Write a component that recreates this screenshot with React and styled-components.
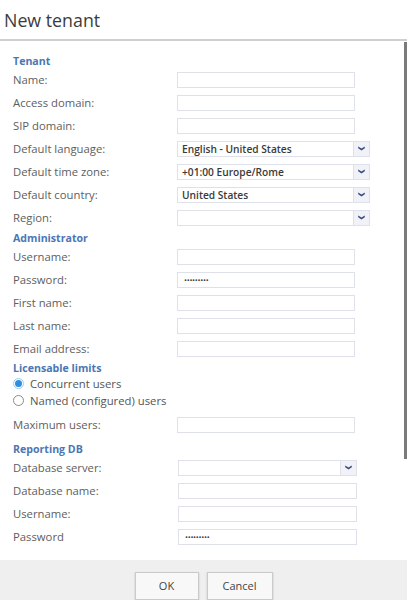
import styled, { createGlobalStyle } from "styled-components";

const GlobalStyle = createGlobalStyle`
    body {
        margin: 0;
        font-family: "Open Sans", "Noto Sans", sans-serif;
        background: #fff;
    }
`;

const Page = styled.div`
    display: flex;
    flex-direction: column;
    height: 600px;
    width: 407px;
    overflow: hidden;
`;

const Header = styled.div`
    height: 41px;
    display: flex;
    align-items: center;
    padding-left: 4px;
    border-bottom: 2px solid #cfcfcf;
    box-sizing: border-box;
    flex: none;
`;

const Title = styled.h1`
    margin: 0;
    font-size: 17.8px;
    font-weight: 400;
    color: #3c3c3c;
`;

const Content = styled.div`
    position: relative;
    flex: 1;
    overflow: hidden;
    padding: 14px 0 0 13px;
`;

const ScrollThumb = styled.div`
    position: absolute;
    right: 0;
    top: 1px;
    width: 3px;
    height: 417px;
    background: #7a7a7a;
`;

const SectionTitle = styled.div`
    height: 12px;
    line-height: 12px;
    margin-top: ${(p) => p.$top || 0}px;
    margin-bottom: 1px;
    font-size: 10.6px;
    font-weight: 700;
    color: #4a77b4;
`;

const Row = styled.div`
    display: grid;
    grid-template-columns: ${(p) => p.$offset || 164}px auto;
    align-items: center;
    height: 23px;
    margin-top: ${(p) => p.$top || 0}px;
`;

const Label = styled.span`
    font-size: 11.3px;
    color: #5e5e5e;
`;

const Input = styled.div`
    width: ${(p) => p.$width || 178}px;
    height: 16px;
    box-sizing: border-box;
    border: 1px solid #dfe1ea;
    background: #fff;
    display: flex;
    align-items: center;
    padding-left: 6px;
    font-size: 8px;
    letter-spacing: -0.3px;
    color: #444;
`;

const Select = styled.div`
    width: ${(p) => p.$width || 193}px;
    height: 16px;
    box-sizing: border-box;
    border: 1px solid #dfe1ea;
    background: #fff;
    display: flex;
    align-items: stretch;
`;

const SelectValue = styled.span`
    flex: 1;
    display: flex;
    align-items: center;
    padding-left: 4px;
    font-size: 10.2px;
    font-weight: 600;
    color: #3a3a3a;
`;

const ArrowBox = styled.span`
    width: 15px;
    border-left: 1px solid #dfe1ea;
    background: #f1f2f7;
    display: flex;
    align-items: center;
    justify-content: center;
`;

const RadioRow = styled.label`
    display: flex;
    align-items: center;
    gap: 6px;
    height: 17px;
    font-size: 11.3px;
    color: #555;
`;

const Radio = styled.span`
    width: 11px;
    height: 11px;
    border-radius: 50%;
    box-sizing: border-box;
    border: 1px solid ${(p) => (p.$checked ? "#9fcdf0" : "#8a8a8a")};
    background: #fff;
    display: flex;
    align-items: center;
    justify-content: center;
    &::after {
        content: "";
        width: 7px;
        height: 7px;
        border-radius: 50%;
        background: ${(p) => (p.$checked ? "#2f8fdc" : "transparent")};
    }
`;

const Footer = styled.div`
    height: 40px;
    flex: none;
    background: #efefef;
    display: flex;
    justify-content: center;
    align-items: flex-start;
    gap: 8px;
    padding-top: 12px;
    box-sizing: border-box;
`;

const Button = styled.button`
    width: ${(p) => p.$width || 64}px;
    height: 28px;
    border: 1px solid #cacaca;
    background: #f8f8f8;
    box-shadow: 0 1px 2px rgba(0, 0, 0, 0.18);
    font-family: "Open Sans", "Noto Sans", sans-serif;
    font-size: 11px;
    color: #444;
    padding: 0 0 2px;
`;

const Chevron = () => (
    <svg width="7" height="5" viewBox="0 0 7 5">
        <path d="M0.2 0.4 L3.5 2.6 L6.8 0.4 L6.8 2.2 L3.5 4.6 L0.2 2.2 Z" fill="#3b4d80" />
    </svg>
);

const Field = ({ label, value, select, width, offset }) => (
    <Row $offset={offset}>
        <Label>{label}</Label>
        {select ? (
            <Select $width={width}>
                <SelectValue>{value}</SelectValue>
                <ArrowBox>
                    <Chevron />
                </ArrowBox>
            </Select>
        ) : (
            <Input $width={width}>{value}</Input>
        )}
    </Row>
);

const dots = "•••••••••";

export default function App() {
    return (
        <Page>
            <GlobalStyle />
            <Header>
                <Title>New tenant</Title>
            </Header>
            <Content>
                <ScrollThumb />
                <SectionTitle>Tenant</SectionTitle>
                <Field label="Name:" />
                <Field label="Access domain:" />
                <Field label="SIP domain:" />
                <Field label="Default language:" value="English - United States" select />
                <Field label="Default time zone:" value="+01:00 Europe/Rome" select />
                <Field label="Default country:" value="United States" select />
                <Field label="Region:" select />

                <SectionTitle $top={3}>Administrator</SectionTitle>
                <Field label="Username:" />
                <Field label="Password:" value={dots} />
                <Field label="First name:" />
                <Field label="Last name:" />
                <Field label="Email address:" />

                <SectionTitle $top={2}>Licensable limits</SectionTitle>
                <RadioRow>
                    <Radio $checked />
                    Concurrent users
                </RadioRow>
                <RadioRow>
                    <Radio />
                    Named (configured) users
                </RadioRow>
                <Row $top={4}>
                    <Label>Maximum users:</Label>
                    <Input />
                </Row>

                <SectionTitle $top={7}>Reporting DB</SectionTitle>
                <Field label="Database server:" select width={179} offset={165} />
                <Field label="Database name:" width={179} offset={165} />
                <Field label="Username:" width={179} offset={165} />
                <Field label="Password" value={dots} width={179} offset={165} />
            </Content>
            <Footer>
                <Button>OK</Button>
                <Button $width={66}>Cancel</Button>
            </Footer>
        </Page>
    );
}
